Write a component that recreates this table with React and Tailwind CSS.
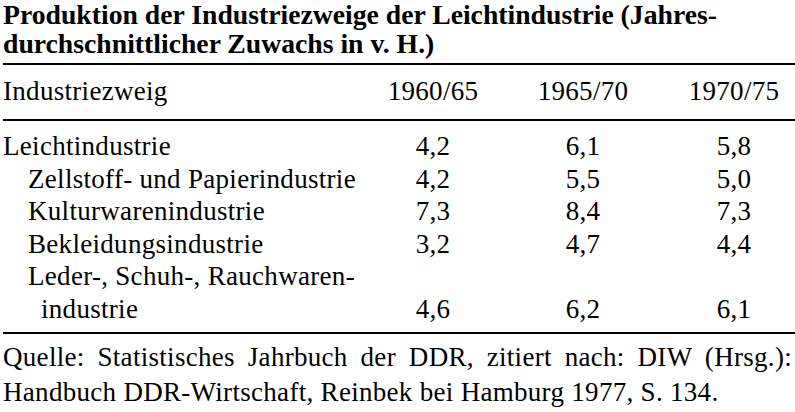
const rows = [
  { label: "Leichtindustrie", values: ["4,2", "6,1", "5,8"], indent: false },
  { label: "Zellstoff- und Papierindustrie", values: ["4,2", "5,5", "5,0"], indent: true },
  { label: "Kulturwarenindustrie", values: ["7,3", "8,4", "7,3"], indent: true },
  { label: "Bekleidungsindustrie", values: ["3,2", "4,7", "4,4"], indent: true },
];

const grid = "grid grid-cols-[370px_120px_180px_122px]";

export default function App() {
  return (
    <div className="w-[795px] h-[412px] bg-white text-black pl-[3px] font-['Liberation_Serif',serif] overflow-hidden">
      <h1 className="text-[27.7px] leading-[29px] font-bold">
        Produktion der Industriezweige der Leichtindustrie (Jahres-
        <br />
        durchschnittlicher Zuwachs in v. H.)
      </h1>

      <div className="mt-[5px] border-t-2 border-black text-[27px] tracking-[0.3px]">
        <div className={`${grid} leading-[32px] pt-[10px] pb-[12px]`}>
          <div>Industriezweig</div>
          <div className="text-center">1960/65</div>
          <div className="text-center">1965/70</div>
          <div className="text-center">1970/75</div>
        </div>

        <div className="border-t-2 border-b-2 border-black leading-[32.6px] pt-[9px] pb-[6px]">
          {rows.map((row) => (
            <div key={row.label} className={grid}>
              <div className={row.indent ? "pl-[25px]" : ""}>{row.label}</div>
              {row.values.map((v, i) => (
                <div key={i} className="text-center">{v}</div>
              ))}
            </div>
          ))}
          <div className={`${grid} items-end`}>
            <div className="pl-[25px]">
              Leder-, Schuh-, Rauchwaren-
              <br />
              <span className="pl-[13px]">industrie</span>
            </div>
            <div className="text-center">4,6</div>
            <div className="text-center">6,2</div>
            <div className="text-center">6,1</div>
          </div>
        </div>
      </div>

      <div className="pt-[6px] pr-[3px] text-[27px] tracking-[0.3px] leading-[35px]">
        <p className="text-justify [text-align-last:justify]">
          Quelle: Statistisches Jahrbuch der DDR, zitiert nach: DIW (Hrsg.):
        </p>
        <p>Handbuch DDR-Wirtschaft, Reinbek bei Hamburg 1977, S. 134.</p>
      </div>
    </div>
  );
}
